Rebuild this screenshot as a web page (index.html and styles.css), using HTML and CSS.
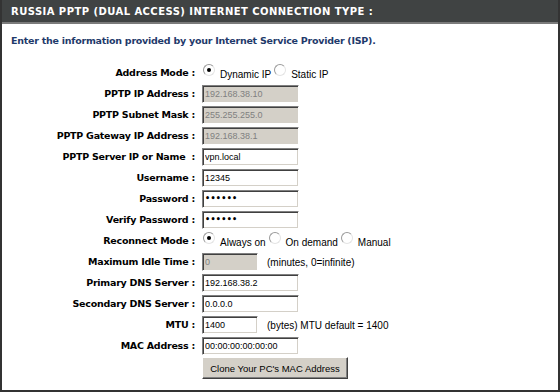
FILE: index.html
```html
<!DOCTYPE html>
<html>
<head>
<meta charset="utf-8">
<link rel="stylesheet" href="styles.css">
</head>
<body>
<div class="panel">
  <div class="head">RUSSIA PPTP (DUAL ACCESS) INTERNET CONNECTION TYPE :</div>
  <p class="intro">Enter the information provided by your Internet Service Provider (ISP).</p>
  <div class="form">
    <div class="lbl">Address Mode :</div>
    <div class="ctl"><span class="radio on"></span><span class="opt">Dynamic IP</span><span class="radio"></span><span class="opt">Static IP</span></div>

    <div class="lbl">PPTP IP Address :</div>
    <div class="ctl"><input class="box" type="text" value="192.168.38.10" disabled></div>

    <div class="lbl">PPTP Subnet Mask :</div>
    <div class="ctl"><input class="box" type="text" value="255.255.255.0" disabled></div>

    <div class="lbl">PPTP Gateway IP Address :</div>
    <div class="ctl"><input class="box" type="text" value="192.168.38.1" disabled></div>

    <div class="lbl">PPTP Server IP or Name&nbsp; :</div>
    <div class="ctl"><input class="box" type="text" value="vpn.local"></div>

    <div class="lbl">Username :</div>
    <div class="ctl"><input class="box" type="text" value="12345"></div>

    <div class="lbl">Password :</div>
    <div class="ctl"><input class="box pw" type="password" value="123456"></div>

    <div class="lbl">Verify Password :</div>
    <div class="ctl"><input class="box pw" type="password" value="123456"></div>

    <div class="lbl">Reconnect Mode :</div>
    <div class="ctl"><span class="radio on"></span><span class="opt">Always on</span><span class="radio"></span><span class="opt">On demand</span><span class="radio"></span><span class="opt">Manual</span></div>

    <div class="lbl">Maximum Idle Time :</div>
    <div class="ctl"><input class="box short" type="text" value="0" disabled><span class="note">(minutes, 0=infinite)</span></div>

    <div class="lbl">Primary DNS Server :</div>
    <div class="ctl"><input class="box" type="text" value="192.168.38.2"></div>

    <div class="lbl">Secondary DNS Server :</div>
    <div class="ctl"><input class="box" type="text" value="0.0.0.0"></div>

    <div class="lbl">MTU :</div>
    <div class="ctl"><input class="box short" type="text" value="1400"><span class="note">(bytes) MTU default = 1400</span></div>

    <div class="lbl">MAC Address :</div>
    <div class="ctl"><input class="box" type="text" value="00:00:00:00:00:00"></div>

    <div class="lbl"></div>
    <div class="ctl btnrow"><button class="btn" type="button">Clone Your PC's MAC Address</button></div>
  </div>
</div>
</body>
</html>
```

FILE: styles.css
```css
html, body {
  margin: 0;
  padding: 0;
  background: #ffffff;
}

.panel {
  width: 560px;
  height: 392px;
  box-sizing: border-box;
  border: 2px solid #333333;
  border-top: 0;
  background: #ffffff;
  font-family: "DejaVu Sans", Verdana, sans-serif;
}

.head {
  height: 22px;
  line-height: 23px;
  background: #404343;
  border-bottom: 2px solid #7b7b7b;
  color: #ffffff;
  font-weight: bold;
  font-size: 10px;
  letter-spacing: 0.45px;
  padding-left: 9px;
  white-space: nowrap;
}

.intro {
  margin: 0;
  padding: 10px 0 0 9px;
  height: 28px;
  line-height: 14px;
  font-size: 9.5px;
  letter-spacing: -0.25px;
  font-weight: bold;
  color: #1f3a6b;
}

.form {
  display: grid;
  grid-template-columns: 193px 1fr;
  column-gap: 7px;
  grid-auto-rows: 21px;
  align-items: center;
}

.lbl {
  text-align: right;
  font-size: 9.5px;
  letter-spacing: -0.25px;
  font-weight: bold;
  color: #000000;
  white-space: nowrap;
}

.ctl {
  display: flex;
  align-items: center;
  font-family: "Liberation Sans", Arial, sans-serif;
  font-size: 10px;
  color: #000000;
}

.radio {
  width: 12px;
  height: 12px;
  box-sizing: border-box;
  border-radius: 50%;
  background: #ffffff;
  border: 1px solid;
  border-color: #9a9a9a #e4e4e4 #e4e4e4 #9a9a9a;
  position: relative;
  margin-top: -5px;
  margin-left: 1px;
}

.radio.on::after {
  content: "";
  position: absolute;
  left: 3px;
  top: 3px;
  width: 4px;
  height: 4px;
  border-radius: 50%;
  background: #000000;
}

.opt {
  margin: 3px 2px 0 5px;
}

.box {
  width: 97px;
  height: 18px;
  box-sizing: border-box;
  margin: 0;
  padding: 0 2px;
  border: 1px solid;
  border-color: #808080 #ffffff #ffffff #808080;
  box-shadow: inset 1px 1px 0 #404040, inset -1px -1px 0 #d4d0c8;
  background: #ffffff;
  font-family: "Liberation Sans", Arial, sans-serif;
  font-size: 9px;
  color: #000000;
  outline: none;
}

.box:disabled {
  background: #d4d0c8;
  color: #808080;
}

.box.short {
  width: 56px;
}

.box.pw {
  font-family: "DejaVu Sans", sans-serif;
  font-size: 8px;
  font-weight: bold;
  letter-spacing: 0.3px;
}

.note {
  margin-left: 9px;
  margin-top: 1px;
}

.btnrow {
  align-self: start;
  padding-top: 1px;
}

.btn {
  width: 146px;
  height: 22px;
  margin: 0;
  padding: 0;
  background: #d4d0c8;
  border: 1px solid;
  border-color: #ffffff #404040 #404040 #ffffff;
  box-shadow: inset -1px -1px 0 #808080;
  font-family: "Liberation Sans", Arial, sans-serif;
  font-size: 9.5px;
  color: #000000;
}
```
